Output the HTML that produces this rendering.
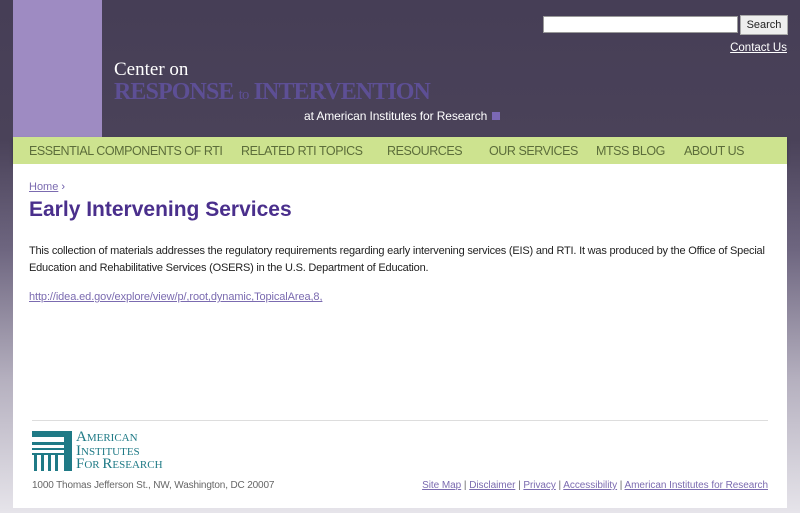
<!DOCTYPE html>
<html><head><meta charset="utf-8"><style>
body{margin:0;width:800px;height:513px;overflow:hidden;font-family:"Liberation Sans",Arial,sans-serif;
background:linear-gradient(to bottom,#463e56 0px,#4a4259 140px,#6e6680 250px,#b5b0bf 380px,#e6e4ea 513px);position:relative}
.bar{position:absolute;left:13px;top:0;width:89px;height:137px;background:#9e8bc2}
.search{position:absolute;left:543px;top:16px;width:193px;height:15px;background:#fff;border:1px solid #999}
.sbtn{position:absolute;left:740px;top:15px;width:46px;height:18px;background:#eee;border:1px solid #aaa;font-size:11px;line-height:18px;text-align:center;color:#222}
.contact{position:absolute;right:13px;top:42px;font-size:11.5px;color:#fff;text-decoration:underline}
.t1{position:absolute;left:114px;top:59px;font-family:"Liberation Serif",serif;font-size:19px;color:#fff}
.t2{position:absolute;left:114px;top:79px;font-family:"Liberation Serif",serif;font-size:24px;font-weight:bold;color:#5d4f95;letter-spacing:-0.9px}
.t2 small{font-size:15px;font-weight:normal}
.t3{position:absolute;left:304px;top:109px;font-size:12px;color:#fff;letter-spacing:-0.1px}
.t3 span{display:inline-block;width:8px;height:8px;background:#7b68b4;margin-left:5px}
.nav{position:absolute;left:13px;top:137px;width:774px;height:27px;background:#cde38f;box-shadow:0 2px 3px rgba(0,0,0,.3)}
.nav span{position:absolute;top:7px;font-size:12.5px;color:#5c6d3a;letter-spacing:-0.45px}
.main{position:absolute;left:13px;top:164px;width:774px;height:344px;background:#fff}
.crumb{position:absolute;left:29px;top:181px;font-size:11px;color:#6a5aa8}
.crumb u{color:#7b6bb0}
h1{position:absolute;left:29px;top:198px;margin:0;font-size:21px;color:#4a2f8c;font-weight:bold}
.p{position:absolute;left:29px;top:243px;font-size:11px;line-height:17px;color:#222;width:760px;letter-spacing:-0.2px}
.link{position:absolute;left:29px;top:291px;font-size:11px;color:#7b6bb0;text-decoration:underline;letter-spacing:-0.1px}
.hr{position:absolute;left:32px;top:420px;width:736px;height:1px;background:#ddd}
.addr{position:absolute;left:32px;top:480px;font-size:10px;color:#666;letter-spacing:-0.15px}
.flinks{position:absolute;right:32px;top:480px;font-size:10px;color:#666;letter-spacing:-0.05px}
.flinks u{color:#7b6bb0}
.logo{position:absolute;left:32px;top:431px}
.lt{position:absolute;left:76px;top:431px;font-family:"Liberation Serif",serif;color:#1f7a86;font-size:11px;line-height:12.5px}
.lt b{font-size:15px;font-weight:normal}
</style></head><body>
<div class="bar"></div>
<div class="search"></div><div class="sbtn">Search</div>
<div class="contact">Contact Us</div>
<div class="t1">Center on</div>
<div class="t2">RESPONSE <small>to</small> INTERVENTION</div>
<div class="t3">at American Institutes for Research<span></span></div>
<div class="nav">
<span style="left:16px">ESSENTIAL COMPONENTS OF RTI</span>
<span style="left:228px">RELATED RTI TOPICS</span>
<span style="left:374px">RESOURCES</span>
<span style="left:476px">OUR SERVICES</span>
<span style="left:583px">MTSS BLOG</span>
<span style="left:671px">ABOUT US</span>
</div>
<div class="main"></div>
<div class="crumb"><u>Home</u> ›</div>
<h1>Early Intervening Services</h1>
<div class="p">This collection of materials addresses the regulatory requirements regarding early intervening services (EIS) and RTI. It was produced by the Office of Special Education and Rehabilitative Services (OSERS) in the U.S. Department of Education.</div>
<div class="link">http://idea.ed.gov/explore/view/p/,root,dynamic,TopicalArea,8,</div>
<div class="hr"></div>
<svg class="logo" width="40" height="40" viewBox="0 0 40 40">
<rect x="0" y="0" width="40" height="6" fill="#1f7a86"/>
<rect x="32" y="0" width="8" height="40" fill="#1f7a86"/>
<rect x="0" y="11" width="32" height="3" fill="#1f7a86"/>
<rect x="0" y="17" width="32" height="2" fill="#1f7a86"/>
<rect x="2" y="24" width="3" height="16" fill="#1f7a86"/>
<rect x="9" y="24" width="3" height="16" fill="#1f7a86"/>
<rect x="16" y="24" width="3" height="16" fill="#1f7a86"/>
<rect x="23" y="24" width="3" height="16" fill="#1f7a86"/>
<rect x="0" y="22" width="32" height="2" fill="#1f7a86"/>
</svg>
<div class="lt"><b>A</b>MERICAN<br><b>I</b>NSTITUTES<br><b>F</b>OR <b>R</b>ESEARCH</div>
<div class="addr">1000 Thomas Jefferson St., NW, Washington, DC 20007</div>
<div class="flinks"><u>Site Map</u> | <u>Disclaimer</u> | <u>Privacy</u> | <u>Accessibility</u> | <u>American Institutes for Research</u></div>
</body></html>
